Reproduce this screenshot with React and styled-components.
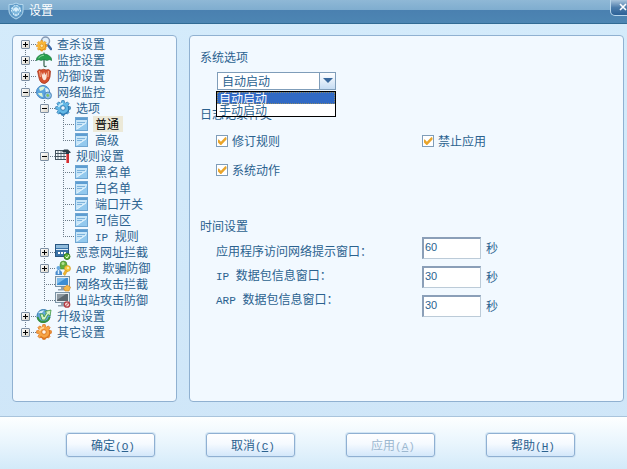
import React, { useState } from 'react'
import styled, { createGlobalStyle } from 'styled-components'

const GlobalStyle = createGlobalStyle`
    * {
        box-sizing: border-box;
    }

    body {
        margin: 0;
        font-family: "Noto Sans CJK SC", sans-serif;
        font-size: 12px;
        line-height: 16px;
        color: #2b628f;
    }

    button, input, select {
        font: inherit;
        color: inherit;
    }
`

/* ---------- icons ---------- */

const ShieldIcon = () => (
    <svg width="16" height="18" viewBox="0 0 16 18">
        <path d="M8 1 Q11 3 15 2.500 V9 Q15 14 8 17 Q1 14 1 9 V2.500 Q5 3 8 1Z" fill="#5f9bc8" stroke="#b4d8ee" />
        <circle cx="8" cy="8" r="4.500" fill="#7fb8dd" stroke="#e4f6ff" strokeDasharray="2 1" />
        <path d="M5 7 L8 5 L11 7 L8 10Z" fill="#d9effb" />
        <path d="M5 12 L8 14 L11 12 M4 6 L6 9 M12 6 L10 9" fill="none" stroke="#d4efff" />
    </svg>
)

const teeth = [0, 45, 90, 135, 180, 225, 270, 315]

const GearShape = ({ color, edge, hole }) => (
    <>
        {teeth.map(a => (
            <path key={a} d="M6.200 3.500 L6.800 0.600 H9.200 L9.800 3.500Z" fill={color} stroke={edge} strokeWidth="0.700" transform={`rotate(${a} 8 8)`} />
        ))}
        <circle cx="8" cy="8" r="5.400" fill={color} />
        <path d="M13 6 A5.400 5.400 0 0 1 4.500 12.500" fill="none" stroke={edge} strokeWidth="1.200" />
        <circle cx="8" cy="8" r="2.300" fill={hole} stroke={edge} strokeWidth="0.900" />
    </>
)

const ScanIcon = () => (
    <svg width="16" height="16" viewBox="0 0 16 16">
        <path d="M11.500 8.500 L15 13" stroke="#3d6aa8" strokeWidth="2.500" strokeLinecap="round" />
        <circle cx="9.500" cy="5" r="4" fill="#dfeefa" stroke="#8599b4" strokeWidth="1.500" />
        <g transform="translate(0 4) scale(0.720)">
            <GearShape color="#f9b838" edge="#dd8410" hole="#ffe9a8" />
        </g>
    </svg>
)

const UmbrellaIcon = () => (
    <svg width="16" height="16" viewBox="0 0 16 16">
        <path d="M8 7 V13.500 Q8.500 15.500 10.500 14" fill="none" stroke="#3f6b57" strokeWidth="1.300" />
        <path d="M0 8.500 Q1 2.500 8 2 Q15 2.500 16 8.500 Q13.500 6.800 11 8.500 Q8 6.800 5 8.500 Q3 6.800 0 8.500Z" fill="#27a04e" stroke="#137139" strokeWidth="0.600" />
        <path d="M2.500 6 Q4.500 3.500 8 3.200" fill="none" stroke="#8ad99a" />
        <path d="M8 0.500 V2" stroke="#137139" />
    </svg>
)

const GloveIcon = () => (
    <svg width="16" height="16" viewBox="0 0 16 16">
        <path d="M1.500 3 Q3 0.500 5 2 Q8 0.500 10 2 Q13 0.500 14.500 3 L14 9 Q13 14 9 15.500 Q4 15.500 3 10Z" fill="#d4512e" stroke="#9f3018" strokeWidth="0.700" />
        <path d="M3.500 3 L4.500 9 M12.500 3 L12 9" stroke="#f2a07e" strokeWidth="1.200" />
        <path d="M5.500 4 L7 7 L8 4 L9.500 7 L11 4 L10.500 10 Q9.500 13 7.500 12 Q5.500 10 5.500 4Z" fill="#fbe5d8" />
    </svg>
)

const GlobeIcon = () => (
    <svg width="16" height="16" viewBox="0 0 16 16">
        <circle cx="7" cy="8" r="6.500" fill="#5ba5de" stroke="#4787c3" />
        <path d="M3 4 Q6 1.500 9 3 L7 6 L4 7Z M2 9 L6 9 L7 13 Q3 12 2 9Z" fill="#daf3d6" />
        <path d="M9 4 Q13 4 13 8 L10 9Z" fill="#d8effd" />
        <circle cx="12" cy="11.500" r="3.500" fill="#90c2ea" stroke="#3d78b0" strokeWidth="0.800" />
        <path d="M10 11 L12 9.500 L13.500 12 L11.500 13Z" fill="#83c35a" />
    </svg>
)

const OptionIcon = () => (
    <svg width="16" height="16" viewBox="0 0 16 16">
        <GearShape color="#62b8e6" edge="#2b76ae" hole="#f1f9ff" />
        <path d="M3.500 7 Q4.500 4 8 3.500" fill="none" stroke="#c8edfb" strokeWidth="1.500" />
    </svg>
)

const PageIcon = () => (
    <svg width="16" height="16" viewBox="0 0 16 16">
        <rect x="1.500" y="1.500" width="12" height="13" fill="#c9e6f8" stroke="#6fa6d2" />
        <rect x="2" y="2" width="11" height="2" fill="#5d9dd2" />
        <path d="M2 14 L13 6 V14Z" fill="#93c9ee" />
        <path d="M3 6.500 H11 M3 8.500 H8" stroke="#7db3dc" />
        <path d="M3 13 L12 7" stroke="#e6f5fe" />
    </svg>
)

const RuleIcon = () => (
    <svg width="16" height="16" viewBox="0 0 16 16">
        <rect x="0.500" y="2.500" width="11" height="9" fill="#f5fafc" stroke="#42535f" />
        <path d="M1 5.500 H11 M1 8.500 H11" stroke="#42535f" />
        <path d="M2 4 H10 M2 7 H10 M2 10 H10" stroke="#6c7d89" strokeDasharray="2 1" />
        <path d="M7 4 L9 1.500 H13 L16 4.500 L14.500 5 H14 V6 H11 V4.500Z" fill="#293b47" />
        <rect x="11" y="6" width="3" height="9" fill="#d02e32" />
        <path d="M11.500 6 V15" stroke="#ee7b78" />
    </svg>
)

const UrlIcon = () => (
    <svg width="16" height="16" viewBox="0 0 16 16">
        <rect x="0.500" y="0.500" width="13" height="12" fill="#3b73a8" stroke="#285782" />
        <rect x="1" y="1" width="12" height="3" fill="#8fbbdc" />
        <path d="M1 5.500 H13" stroke="#d7eaf7" />
        <path d="M3 9 H11" stroke="#fff" strokeWidth="2" strokeDasharray="2 1" />
        <circle cx="12" cy="12.500" r="3" fill="#5fb437" stroke="#377d20" />
        <path d="M10.500 12.500 L12 14 L14 11" fill="none" stroke="#e9ffda" />
    </svg>
)

const ArpIcon = () => (
    <svg width="16" height="16" viewBox="0 0 16 16">
        <path d="M5 9 V5 Q5 1 8.500 1 Q12 1 12 5 V9Z" fill="#63ad3b" stroke="#42882c" strokeWidth="0.600" />
        <circle cx="8" cy="3.500" r="1.500" fill="#b4e08d" />
        <circle cx="3.500" cy="8" r="2" fill="#6aaae0" />
        <path d="M0.500 15 V12 Q3.500 7 7 12 V15Z" fill="#4a8ccd" />
        <path d="M3.500 10 V14" stroke="#d7edff" strokeWidth="1.500" />
        <circle cx="12.500" cy="8.500" r="3" fill="#f8ca3e" stroke="#cc9322" strokeWidth="0.600" />
        <circle cx="13" cy="8" r="1" fill="#fff2c4" />
        <path d="M10.500 10 L8 14 L10 15.500 L12.500 11Z" fill="#f0b52c" stroke="#cc9322" strokeWidth="0.500" />
    </svg>
)

const MonitorIcon = ({ screen, light, blocked }) => (
    <svg width="16" height="16" viewBox="0 0 16 16">
        <rect x="0.500" y="0.500" width="14" height="10" fill="#e6edf2" stroke="#7b93a5" />
        <rect x="2" y="2" width="11" height="7" fill={screen} />
        <path d="M2 8 V2 H11Z" fill={light} />
        <path d="M6 11 H9 V13 H11 V14.500 H3 V13 H6Z" fill="#91a2af" />
        {blocked ?
            <>
                <circle cx="12" cy="12.500" r="2.700" fill="#f4d6d3" stroke="#b23a42" strokeWidth="1.300" />
                <path d="M10.500 14 L13.500 11" stroke="#b23a42" />
            </>
            : <path d="M8.500 12 L12 9 L15.500 11 L14 15 H10Z" fill="#f5b849" stroke="#c98124" strokeWidth="0.600" />
        }
    </svg>
)

const UpdateIcon = () => (
    <svg width="16" height="16" viewBox="0 0 16 16">
        <circle cx="7.500" cy="8" r="6.500" fill="#62a8d9" stroke="#397cae" />
        <path d="M2 5 Q4 2 8 2.500 L6 5Z" fill="#d7eefb" />
        <path d="M1.500 9 Q3 14.500 8 14 Q13 13 13.500 9" fill="none" stroke="#37923f" strokeWidth="2" />
        <path d="M4 6 L6 12 H9 L12 6.500 L14 8 L15 2 L9 3.500 L10.500 5 L8 9 L7 6Z" fill="#d5f2c4" stroke="#38963e" strokeWidth="0.800" />
    </svg>
)

const OtherIcon = () => (
    <svg width="16" height="16" viewBox="0 0 16 16">
        <GearShape color="#f7a545" edge="#d8701d" hole="#fff6ea" />
        <path d="M3.500 7 Q4.500 4 8 3.500" fill="none" stroke="#ffd79c" strokeWidth="1.300" />
    </svg>
)

/* ---------- data ---------- */

const treeData = [
    { text: '查杀设置', icon: <ScanIcon />, closed: true },
    { text: '监控设置', icon: <UmbrellaIcon />, closed: true },
    { text: '防御设置', icon: <GloveIcon />, closed: true },
    {
        text: '网络监控',
        icon: <GlobeIcon />,
        children: [
            {
                text: '选项',
                icon: <OptionIcon />,
                children: [
                    { text: '普通', icon: <PageIcon /> },
                    { text: '高级', icon: <PageIcon /> },
                ],
            },
            {
                text: '规则设置',
                icon: <RuleIcon />,
                children: [
                    { text: '黑名单', icon: <PageIcon /> },
                    { text: '白名单', icon: <PageIcon /> },
                    { text: '端口开关', icon: <PageIcon /> },
                    { text: '可信区', icon: <PageIcon /> },
                    { latin: 'IP ', text: '规则', icon: <PageIcon /> },
                ],
            },
            { text: '恶意网址拦截', icon: <UrlIcon />, closed: true },
            { latin: 'ARP ', text: '欺骗防御', icon: <ArpIcon />, closed: true },
            { text: '网络攻击拦截', icon: <MonitorIcon screen="#3d8ed3" light="#7dbcec" /> },
            { text: '出站攻击防御', icon: <MonitorIcon screen="#5d6870" light="#8e99a1" blocked /> },
        ],
    },
    { text: '升级设置', icon: <UpdateIcon />, closed: true },
    { text: '其它设置', icon: <OtherIcon />, closed: true },
]

const timeouts = [
    { id: 'appTimeout', text: '应用程序访问网络提示窗口：', value: '60' },
    { id: 'ipTimeout', latin: 'IP ', text: '数据包信息窗口：', value: '30' },
    { id: 'arpTimeout', latin: 'ARP ', text: '数据包信息窗口：', value: '30' },
]

const startModes = ['自动启动', '手动启动']

/* ---------- components ---------- */

const TreeNode = ({ node, selected, onSelect }) => {
    const { text, latin, icon, closed, children } = node

    return (
        <TreeItem>
            <TreeRow>
                <Connector>
                    {closed || children ?
                        <Expander aria-label={closed ? '展开' : '折叠'}>
                            <svg width="7" height="7" viewBox="0 0 7 7">
                                <path d={closed ? 'M1 3.500 H6 M3.500 1 V6' : 'M1 3.500 H6'} stroke="#000" />
                            </svg>
                        </Expander>
                        : null
                    }
                </Connector>
                {icon}
                <TreeLabel $selected={selected === text} onClick={() => onSelect(text)}>
                    {latin ? <Latin>{latin}</Latin> : null}{text}
                </TreeLabel>
            </TreeRow>
            {children ?
                <TreeList $nested>
                    {children.map(c => <TreeNode key={c.text} node={c} selected={selected} onSelect={onSelect} />)}
                </TreeList>
                : null
            }
        </TreeItem>
    )
}

const App = () => {
    const [selected, setSelected] = useState('普通')
    const [mode, setMode] = useState(startModes[0])

    return (
        <Dialog>
            <GlobalStyle />
            <TitleBar>
                <ShieldIcon />
                <Title>设置</Title>
                <CloseButton aria-label="关闭">
                    <svg width="8" height="8" viewBox="0 0 8 8">
                        <path d="M1 1 L7 7 M7 1 L1 7" stroke="#fff" strokeWidth="1.600" />
                    </svg>
                </CloseButton>
            </TitleBar>

            <Content>
                <TreePanel>
                    <TreeList>
                        {treeData.map(n => <TreeNode key={n.text} node={n} selected={selected} onSelect={setSelected} />)}
                    </TreeList>
                </TreePanel>

                <OptionsPanel>
                    <SectionTitle id="systemTitle">系统选项</SectionTitle>
                    <Combo>
                        <ComboSelect aria-labelledby="systemTitle" value={mode} onChange={e => setMode(e.target.value)}>
                            {startModes.map(m => <option key={m}>{m}</option>)}
                        </ComboSelect>
                        <ComboArrow>
                            <svg width="10" height="6" viewBox="0 0 10 6">
                                <path d="M0 0 H10 L5 5Z" fill="#39689c" />
                            </svg>
                        </ComboArrow>
                        <ComboList role="listbox">
                            {startModes.map(m => (
                                <ComboOption key={m} role="option" aria-selected={m === mode} $active={m === mode} onClick={() => setMode(m)}>
                                    {m}
                                </ComboOption>
                            ))}
                        </ComboList>
                    </Combo>

                    <SectionTitle>日志记录种类</SectionTitle>
                    <CheckGrid>
                        <CheckLabel><CheckBox type="checkbox" defaultChecked />修订规则</CheckLabel>
                        <CheckLabel><CheckBox type="checkbox" defaultChecked />禁止应用</CheckLabel>
                        <CheckLabel><CheckBox type="checkbox" defaultChecked />系统动作</CheckLabel>
                    </CheckGrid>

                    <SectionTitle>时间设置</SectionTitle>
                    <TimeArea>
                        <TimeLabels>
                            {timeouts.map(t => (
                                <TimeLabel key={t.id} htmlFor={t.id}>
                                    {t.latin ? <Latin>{t.latin}</Latin> : null}{t.text}
                                </TimeLabel>
                            ))}
                        </TimeLabels>
                        <TimeFields>
                            {timeouts.map(t => (
                                <TimeField key={t.id}>
                                    <TimeInput id={t.id} type="text" defaultValue={t.value} />
                                    秒
                                </TimeField>
                            ))}
                        </TimeFields>
                    </TimeArea>
                </OptionsPanel>
            </Content>

            <Footer>
                <FooterButton>确定<Latin>(<u>O</u>)</Latin></FooterButton>
                <FooterButton>取消<Latin>(<u>C</u>)</Latin></FooterButton>
                <FooterButton disabled>应用<Latin>(<u>A</u>)</Latin></FooterButton>
                <FooterButton>帮助<Latin>(<u>H</u>)</Latin></FooterButton>
            </Footer>
        </Dialog>
    )
}

const Dialog = styled.div`
    min-height: 100vh;
    display: flex;
    flex-direction: column;
    background: linear-gradient(#d4ebfb, #cfe6f8);
`

const TitleBar = styled.header`
    height: 24px;
    padding-left: 8px;
    display: flex;
    align-items: flex-start;
    gap: 5px;
    overflow: hidden;
    background: linear-gradient(#8fb8d6 0, #7fadcf 10px, #4a80b0 10px, #4d86b3 100%);
    border-bottom: 1px solid #316b94;

    & > svg {
        margin-top: 2px;
    }
`

const Title = styled.h1`
    margin: 2px 0 0;
    flex: 1;
    color: #fff;
    font-size: 12px;
    font-weight: 400;
`

// the button runs past the right edge of the window
const CloseButton = styled.button`
    width: 26px;
    height: 16px;
    margin-right: -9px;
    padding: 0 0 2px;
    display: flex;
    justify-content: center;
    align-items: center;
    background: linear-gradient(#a9c4dc, #4c7cab 50%, #2b6096);
    border: 1px solid #b9d7ec;
    border-top: 0;
    border-radius: 0 0 5px 5px;
`

const Content = styled.main`
    flex: 1;
    display: flex;
    gap: 12px;
    padding: 11px 3px 14px 12px;
`

const Panel = styled.section`
    background: #f2f9ff;
    border: 1px solid #90b1d1;
    border-radius: 4px;
`

const TreePanel = styled(Panel)`
    flex: 0 0 165px;
    padding-left: 8px;
`

const OptionsPanel = styled(Panel)`
    flex: 1;
    padding: 13px 10px;
`

const TreeList = styled.ul`
    margin: 0;
    padding: 0 0 0 ${props => props.$nested ? '19px' : '0'};
    list-style: none;
`

const TreeItem = styled.li`
    background: repeating-linear-gradient(#6c7c8a 0 1px, transparent 1px 2px) 4px 0 / 1px 100% no-repeat;

    &:last-child {
        background-size: 1px 8px;
    }

    ${TreePanel} > ${TreeList} > &:first-child {
        background-position: 4px 8px;
    }
`

const TreeRow = styled.div`
    height: 16px;
    display: flex;
    align-items: center;
`

const Connector = styled.span`
    width: 15px;
    height: 16px;
    display: flex;
    align-items: center;
    background: repeating-linear-gradient(90deg, #6c7c8a 0 1px, transparent 1px 2px) 4px 8px / 11px 1px no-repeat;
`

const Expander = styled.button`
    width: 9px;
    height: 9px;
    padding: 0;
    display: flex;
    background: linear-gradient(135deg, #fff, #d8d4c8);
    border: 1px solid #7d8fa3;
    border-radius: 1px;
`

const TreeLabel = styled.span`
    margin-left: 3px;
    padding: 0 4px 0 2px;
    white-space: nowrap;
    cursor: default;
    color: ${props => props.$selected ? '#000' : 'inherit'};
    background: ${props => props.$selected ? '#ece9d8' : 'none'};
`

const Latin = styled.span`
    font-family: "Liberation Mono", monospace;
    font-size: 11px;
    line-height: 1;
    white-space: pre;
`

const SectionTitle = styled.h2`
    margin: 0;
    font-size: 12px;
    font-weight: 400;
`

const Combo = styled.div`
    position: relative;
    width: 119px;
    height: 18px;
    margin: 7px 0 16px 17px;
`

const ComboSelect = styled.select`
    width: 100%;
    height: 18px;
    padding: 0 20px 0 4px;
    display: block;
    appearance: none;
    background: #fff;
    border: 1px solid #7f9db9;
    border-radius: 0;
    line-height: 16px;
`

const ComboArrow = styled.span`
    position: absolute;
    top: 1px;
    right: 1px;
    width: 16px;
    height: 16px;
    display: flex;
    justify-content: center;
    align-items: center;
    pointer-events: none;
    background: linear-gradient(#fff, #c5dcf3);
    border-left: 1px solid #7f9db9;
`

const ComboList = styled.ul`
    position: absolute;
    top: 19px;
    left: -1px;
    right: 0;
    margin: 0;
    padding: 0;
    list-style: none;
    background: #fff;
    border: 1px solid #000;
`

const ComboOption = styled.li`
    height: 12px;
    padding-left: 2px;
    line-height: 12px;
    color: ${props => props.$active ? '#fff' : 'inherit'};
    background: ${props => props.$active ? '#316ac5' : 'none'};
    outline: ${props => props.$active ? '1px dotted #8c8a6a' : 'none'};
    outline-offset: -1px;
`

const CheckGrid = styled.div`
    display: grid;
    grid-template-columns: 206px 1fr;
    row-gap: 13px;
    margin: 11px 0 40px 16px;
`

const CheckLabel = styled.label`
    display: flex;
    align-items: center;
    gap: 4px;
`

const CheckBox = styled.input`
    width: 12px;
    height: 12px;
    margin: 0;
    appearance: none;
    background: #fff;
    border: 1px solid #7f9db9;
    display: flex;
    justify-content: center;
    align-items: center;

    &:checked::before {
        content: '';
        width: 9px;
        height: 8px;
        background: #e9a52b;
        clip-path: polygon(0 35%, 15% 30%, 38% 58%, 88% 0, 100% 8%, 100% 32%, 42% 100%, 32% 100%, 0 62%);
    }
`

const TimeArea = styled.div`
    display: flex;
    margin: 3px 0 0 16px;
`

const TimeLabels = styled.div`
    width: 206px;
    padding-top: 2px;
    display: flex;
    flex-direction: column;
`

const TimeLabel = styled.label`
    line-height: 24px;
`

const TimeFields = styled.div`
    display: flex;
    flex-direction: column;
    gap: 7px;
`

const TimeField = styled.div`
    display: flex;
    align-items: center;
    gap: 5px;
`

const TimeInput = styled.input`
    width: 59px;
    height: 22px;
    padding: 0 1px 4px;
    background: #fff;
    border: 1px solid #bccbd8;
    border-top: 2px solid #8b9fb8;
    border-left: 2px solid #8b9fb8;
    font-family: "Liberation Sans", sans-serif;
    font-size: 11px;
`

const Footer = styled.footer`
    display: flex;
    gap: 51px;
    padding: 16px 0 12px 66px;
    background: linear-gradient(#fdffff, #e9f5fd 50%, #d3eaf9);
    border-top: 1px solid #a9c4dc;
`

const FooterButton = styled.button`
    width: 89px;
    height: 24px;
    padding: 0 0 0 5px;
    background: linear-gradient(#fff, #f5faff 45%, #d3e7fa);
    border: 1px solid #8fb0d2;
    border-radius: 3px;
    box-shadow: 0 0 0 1px #d2e5f4;
    white-space: nowrap;

    &:disabled {
        color: #9db8d0;
    }
`

export default App
